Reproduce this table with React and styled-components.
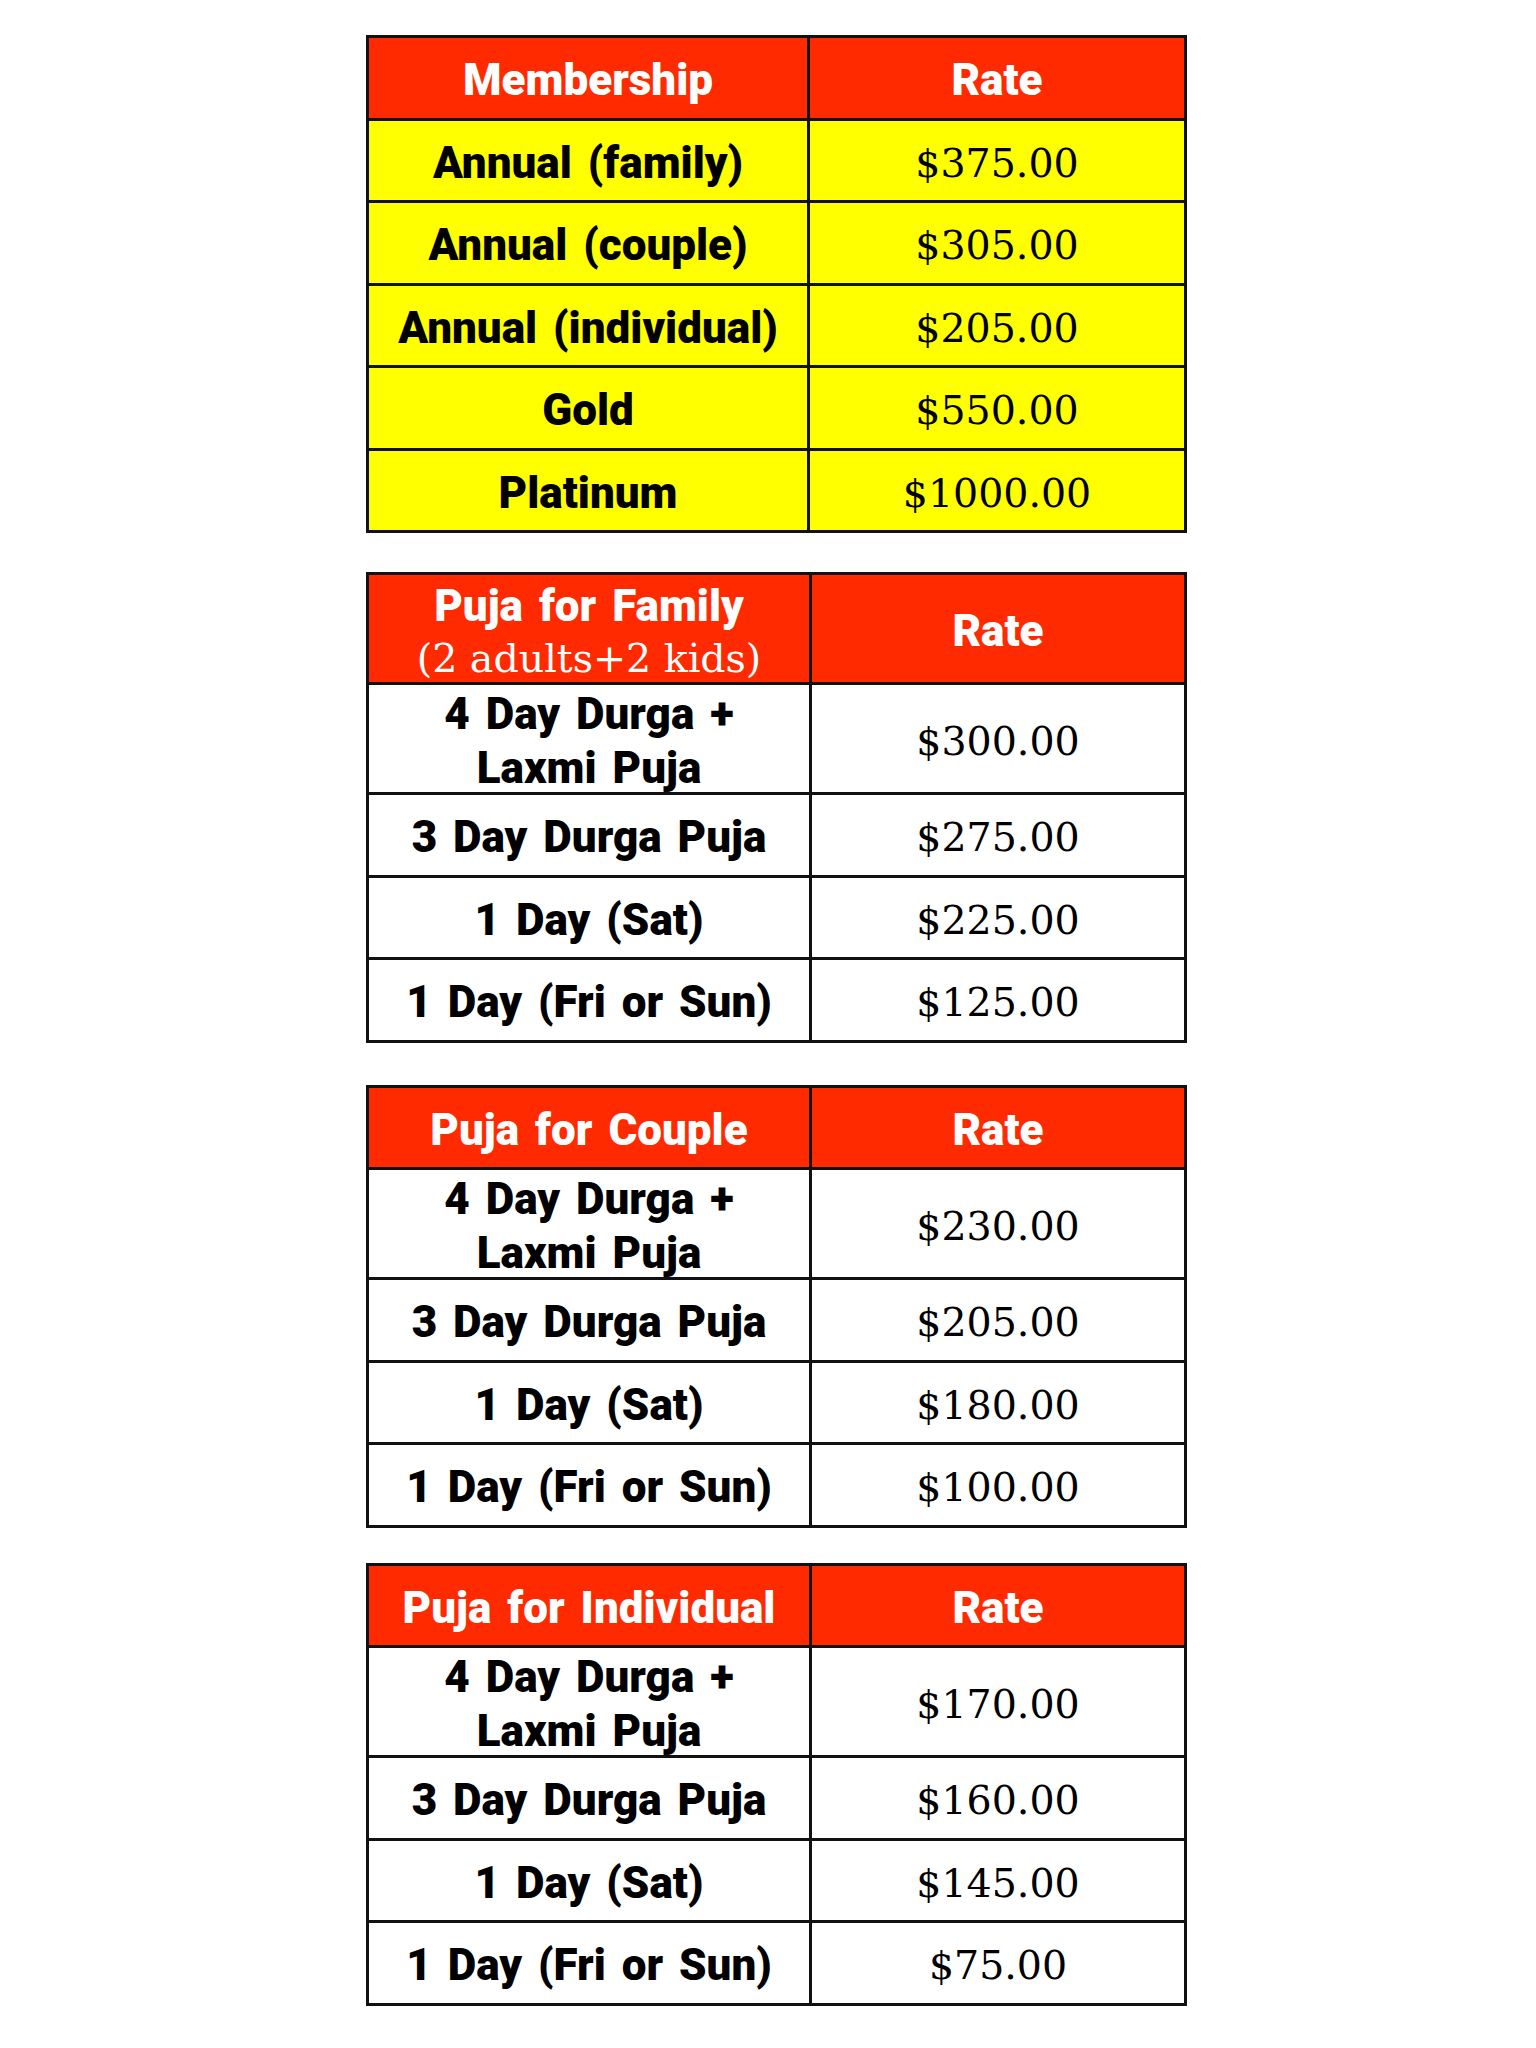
import styled, { createGlobalStyle } from "styled-components";

const GlobalStyle = createGlobalStyle`
  body {
    margin: 0;
    background: #ffffff;
  }
`;

const Page = styled.div`
  display: flex;
  flex-direction: column;
  padding: 35px 0 40px 366px;
`;

const Table = styled.div`
  display: grid;
  grid-template-columns: ${({ $split }) => $split}px 1fr;
  width: 821px;
  box-sizing: border-box;
  margin-top: ${({ $gap }) => $gap}px;
  border: 3px solid #111;
  border-bottom: none;
`;

const Cell = styled.div`
  box-sizing: border-box;
  height: ${({ $tall }) => ($tall ? 110 : 82.5)}px;
  padding-top: 5px;
  display: flex;
  flex-direction: column;
  align-items: center;
  justify-content: center;
  text-align: center;
  border-bottom: 3px solid #111;
  border-right: ${({ $first }) => ($first ? "3px solid #111" : "none")};
  background: ${({ $bg }) => $bg};
  color: #000;
`;

const HeadCell = styled(Cell)`
  background: #ff2a00;
  color: #fff;
`;

const Label = styled.span`
  font-family: Roboto, "Liberation Sans", Arial, sans-serif;
  font-weight: 900;
  font-size: 44px;
  line-height: 54px;
  word-spacing: 5px;
`;

const Value = styled.span`
  font-family: "DejaVu Serif", "Liberation Serif", serif;
  font-size: 39.5px;
  line-height: 50px;
`;

const tables = [
  {
    gap: 0,
    split: 441,
    bg: "#ffff00",
    head: ["Membership"],
    rows: [
      ["Annual (family)", "$375.00"],
      ["Annual (couple)", "$305.00"],
      ["Annual (individual)", "$205.00"],
      ["Gold", "$550.00"],
      ["Platinum", "$1000.00"],
    ],
  },
  {
    gap: 39,
    split: 443,
    bg: "#ffffff",
    head: ["Puja for Family", "(2 adults+2 kids)"],
    rows: [
      [["4 Day Durga +", "Laxmi Puja"], "$300.00"],
      ["3 Day Durga Puja", "$275.00"],
      ["1 Day (Sat)", "$225.00"],
      ["1 Day (Fri or Sun)", "$125.00"],
    ],
  },
  {
    gap: 42,
    split: 443,
    bg: "#ffffff",
    head: ["Puja for Couple"],
    rows: [
      [["4 Day Durga +", "Laxmi Puja"], "$230.00"],
      ["3 Day Durga Puja", "$205.00"],
      ["1 Day (Sat)", "$180.00"],
      ["1 Day (Fri or Sun)", "$100.00"],
    ],
  },
  {
    gap: 35,
    split: 443,
    bg: "#ffffff",
    head: ["Puja for Individual"],
    rows: [
      [["4 Day Durga +", "Laxmi Puja"], "$170.00"],
      ["3 Day Durga Puja", "$160.00"],
      ["1 Day (Sat)", "$145.00"],
      ["1 Day (Fri or Sun)", "$75.00"],
    ],
  },
];

function RateTable({ gap, split, bg, head, rows }) {
  const tallHead = head.length > 1;
  return (
    <Table $gap={gap} $split={split}>
      <HeadCell $first $tall={tallHead}>
        <Label>{head[0]}</Label>
        {head[1] && <Value>{head[1]}</Value>}
      </HeadCell>
      <HeadCell $tall={tallHead}>
        <Label>Rate</Label>
      </HeadCell>
      {rows.map(([label, price], i) => {
        const lines = Array.isArray(label) ? label : [label];
        const tall = lines.length > 1;
        return [
          <Cell key={`l${i}`} $first $tall={tall} $bg={bg}>
            {lines.map((l) => (
              <Label key={l}>{l}</Label>
            ))}
          </Cell>,
          <Cell key={`v${i}`} $tall={tall} $bg={bg}>
            <Value>{price}</Value>
          </Cell>,
        ];
      })}
    </Table>
  );
}

export default function App() {
  return (
    <>
      <GlobalStyle />
      <Page>
        {tables.map((t) => (
          <RateTable key={t.head[0]} {...t} />
        ))}
      </Page>
    </>
  );
}
